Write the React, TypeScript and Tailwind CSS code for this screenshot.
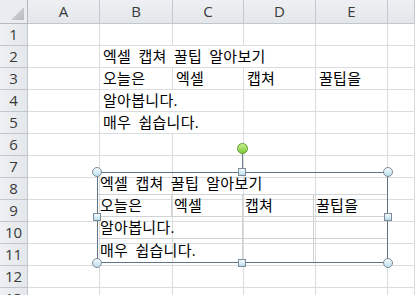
import React from "react";

type Cell = { span?: number; text?: string };

const COLS = ["A", "B", "C", "D", "E", ""];

const rowsData: Record<number, Cell[]> = {
  2: [{}, { span: 3, text: "엑셀 캡쳐 꿀팁 알아보기" }, {}, {}],
  3: [{}, { text: "오늘은" }, { text: "엑셀" }, { text: "캡쳐" }, { text: "꿀팁을" }, {}],
  4: [{}, { span: 2, text: "알아봅니다." }, {}, {}, {}],
  5: [{}, { span: 2, text: "매우 쉽습니다." }, {}, {}, {}],
};

const defaultRow: Cell[] = [{}, {}, {}, {}, {}, {}];

function spanClass(span?: number) {
  if (span === 2) return "col-span-2";
  if (span === 3) return "col-span-3";
  return "";
}

function Handle({ cls }: { cls: string }) {
  return (
    <div
      className={
        "absolute w-[10px] h-[10px] rounded-full border border-[#7d8b98] bg-gradient-to-b from-[#f4fbfe] to-[#bcdfee] " +
        cls
      }
    />
  );
}

function Square({ cls }: { cls: string }) {
  return (
    <div
      className={
        "absolute w-[8px] h-[8px] border border-[#7d8b98] bg-gradient-to-b from-[#f4fbfe] to-[#bcdfee] " +
        cls
      }
    />
  );
}

export default function App() {
  const rowNums = Array.from({ length: 13 }, (_, i) => i + 1);
  return (
    <div
      className="relative w-[415px] h-[295px] overflow-hidden bg-white text-black"
      style={{ fontFamily: '"Open Sans", "Noto Sans CJK KR", sans-serif' }}
    >
      <div className="grid grid-cols-[28px_72px_73px_71px_72px_72px_1fr] grid-rows-[24px_repeat(13,22px)]">
        {/* corner */}
        <div className="relative border-r border-b border-[#b6bac0] bg-[#e9ecf0]">
          <div
            className="absolute right-[3px] bottom-[3px] w-[13px] h-[13px] bg-gradient-to-br from-[#d4d7db] to-[#b8bcc2]"
            style={{ clipPath: "polygon(100% 0, 100% 100%, 0 100%)" }}
          />
        </div>
        {COLS.map((c, i) => (
          <div
            key={"h" + i}
            className="flex items-center justify-center border-r border-b border-[#c3c7cd] bg-gradient-to-b from-[#eef0f3] to-[#e3e6ea] text-[15px] text-[#3a3a3a] leading-none"
          >
            {c}
          </div>
        ))}
        {rowNums.map((r) => {
          const cells = rowsData[r] ?? defaultRow;
          return (
            <React.Fragment key={"r" + r}>
              <div className="flex items-center justify-center border-r border-b border-[#c3c7cd] bg-gradient-to-r from-[#eef0f3] to-[#e4e7eb] text-[15px] text-[#3a3a3a] leading-none">
                {r}
              </div>
              {cells.map((c, j) => (
                <div
                  key={"c" + r + "-" + j}
                  className={
                    "flex items-center border-r border-b border-[#dadcdd] pl-[3px] text-[15px] tracking-[0.3px] [word-spacing:3px] whitespace-nowrap leading-none " +
                    spanClass(c.span)
                  }
                >
                  {c.text}
                </div>
              ))}
            </React.Fragment>
          );
        })}
      </div>

      {/* pasted picture */}
      <div className="absolute left-[97px] top-[172px] w-[291px] h-[91px] border border-[#607487]">
        <div className="grid grid-cols-[74px_71px_71px_1fr] grid-rows-[22px_22px_22px_1fr] h-full text-[15px] tracking-[0.3px] [word-spacing:3px] leading-none">
          <div className="col-span-3 flex items-center pl-[2px] border-b border-[#d0d2d4] whitespace-nowrap">
            엑셀 캡쳐 꿀팁 알아보기
          </div>
          <div className="border-b border-[#d0d2d4]" />
          <div className="flex items-center pl-[2px] border-r border-b border-[#d0d2d4]">오늘은</div>
          <div className="flex items-center pl-[2px] border-r border-b border-[#d0d2d4]">엑셀</div>
          <div className="flex items-center pl-[2px] border-r border-b border-[#d0d2d4]">캡쳐</div>
          <div className="flex items-center pl-[2px] border-b border-[#d0d2d4]">꿀팁을</div>
          <div className="col-span-2 flex items-center pl-[2px] border-r border-b border-[#d0d2d4] whitespace-nowrap">
            알아봅니다.
          </div>
          <div className="border-r border-b border-[#d0d2d4]" />
          <div className="border-b border-[#d0d2d4]" />
          <div className="col-span-2 flex items-center pl-[2px] border-r border-[#d0d2d4] whitespace-nowrap">
            매우 쉽습니다.
          </div>
          <div className="border-r border-[#d0d2d4]" />
          <div />
        </div>

        {/* rotation handle */}
        <div className="absolute left-[144px] top-[-20px] w-px h-[16px] bg-[#6f8192]" />
        <div className="absolute left-[139px] top-[-30px] w-[11px] h-[11px] rounded-full border border-[#5f9a32] bg-gradient-to-b from-[#c6ef8e] to-[#7ccb2f]" />

        <Handle cls="left-[-6px] top-[-6px]" />
        <Handle cls="right-[-6px] top-[-6px]" />
        <Handle cls="left-[-6px] bottom-[-6px]" />
        <Handle cls="right-[-6px] bottom-[-6px]" />
        <Square cls="left-[140px] top-[-5px]" />
        <Square cls="left-[140px] bottom-[-5px]" />
        <Square cls="left-[-5px] top-[40px]" />
        <Square cls="right-[-5px] top-[40px]" />
      </div>
    </div>
  );
}
